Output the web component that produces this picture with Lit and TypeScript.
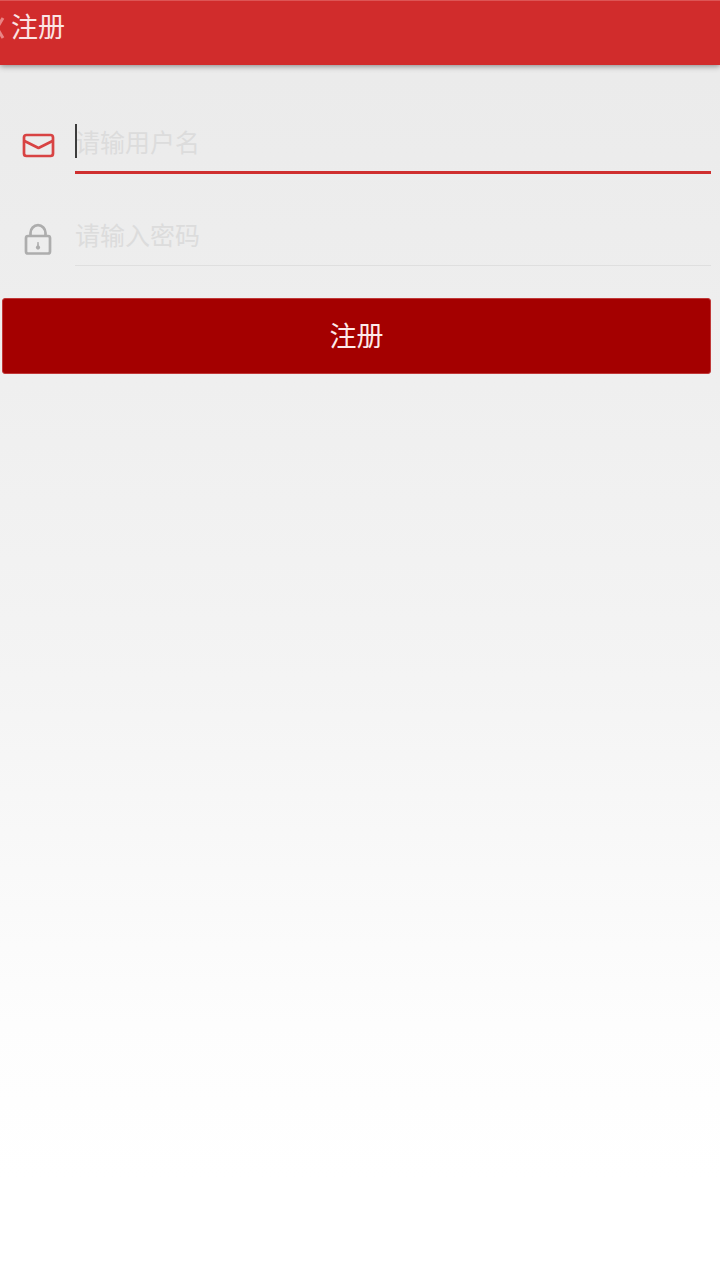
import { LitElement, html, css, svg } from "lit";
import { customElement } from "lit/decorators.js";

const mailIcon = svg`
  <rect x="2" y="6" width="29" height="21" rx="2.5"></rect>
  <path d="M2.5 12 L16.5 19 L30.5 12"></path>`;

const lockIcon = svg`
  <rect x="4" y="13" width="24" height="17.5" rx="2"></rect>
  <path d="M8.5 13 V10 a7.5 7.8 0 0 1 15 0 V13"></path>
  <path d="M16 19 L16.8 24 H15.2 Z" stroke-width="0.8" fill="currentColor"></path>
  <circle cx="16" cy="24.6" r="2.1" stroke="none" fill="currentColor"></circle>`;

@customElement("app-root")
export class AppRoot extends LitElement {
  static styles = css`
    :host {
      display: block;
      min-height: 100vh;
      overflow-x: hidden;
      font-family: "Noto Sans CJK SC", "Noto Sans", sans-serif;
      background: linear-gradient(#eaeaea 0, #efefef 30%, #f4f4f4 53%, #fdfdfd 80%, #fff 92%);
    }
    .bar {
      display: flex;
      align-items: flex-start;
      height: 65px;
      box-sizing: border-box;
      padding-top: 6px;
      background: #d12c2c;
      border-top: 1px solid #dd5555;
      box-shadow: 0 1px 6px rgba(0, 0, 0, 0.45);
      color: #fbe4e4;
    }
    .back {
      display: block;
      width: 11px;
      height: 40px;
      padding: 0;
      border: 0;
      background: none;
      color: #e98585;
    }
    .back svg {
      display: block;
      width: 11px;
      height: 40px;
    }
    h1 {
      margin: 0;
      font-size: 27px;
      line-height: 38px;
      font-weight: 400;
    }
    form {
      display: flex;
      flex-direction: column;
      gap: 30px;
      padding: 45px 9px 0 2px;
    }
    .field {
      display: grid;
      grid-template-columns: 73px 1fr;
      height: 64px;
    }
    .label {
      display: flex;
      justify-content: center;
      align-items: center;
      padding-top: 6px;
      color: #adadad;
    }
    .label svg {
      width: 33px;
      height: 33px;
      fill: none;
      stroke: currentColor;
      stroke-width: 2.7;
      stroke-linejoin: round;
    }
    .focused .label {
      color: #d84343;
    }
    .entry {
      position: relative;
      display: flex;
      padding-bottom: 7px;
      border-bottom: 1px solid #dfdfdf;
      margin-bottom: 2px;
    }
    .focused .entry {
      padding-bottom: 6px;
      margin-bottom: 0;
      border-bottom: 3px solid #cf2f2f;
    }
    .caret {
      position: absolute;
      left: 0;
      top: 14px;
      width: 2px;
      height: 34px;
      background: #3c3c3c;
    }
    input {
      flex: 1;
      min-width: 0;
      box-sizing: border-box;
      padding: 6px 0 0;
      border: 0;
      outline: 0;
      background: none;
      font: inherit;
      font-size: 25px;
      color: #333;
    }
    input::placeholder {
      color: #dcdcdc;
      opacity: 1;
    }
    .submit {
      height: 76px;
      padding: 0 0 2px;
      border: 1px solid #c03838;
      border-radius: 3px;
      background: #a40000;
      color: #fdeaea;
      font: inherit;
      font-size: 27px;
      line-height: 38px;
    }
  `;

  render() {
    return html`
      <header class="bar">
        <button class="back" type="button" aria-label="返回">
          <svg viewBox="0 0 11 40" fill="none" stroke="currentColor" stroke-width="3">
            <path d="M3 11 L-3 21 L3 31"></path>
          </svg>
        </button>
        <h1>注册</h1>
      </header>
      <form>
        <div class="field focused">
          <label class="label" for="user" aria-label="用户名">
            <svg viewBox="0 0 33 33">${mailIcon}</svg>
          </label>
          <div class="entry">
            <input id="user" type="text" placeholder="请输用户名" />
            <span class="caret"></span>
          </div>
        </div>
        <div class="field">
          <label class="label" for="pass" aria-label="密码">
            <svg viewBox="0 0 33 33">${lockIcon}</svg>
          </label>
          <div class="entry">
            <input id="pass" type="password" placeholder="请输入密码" />
          </div>
        </div>
        <button class="submit" type="button">注册</button>
      </form>
    `;
  }
}
